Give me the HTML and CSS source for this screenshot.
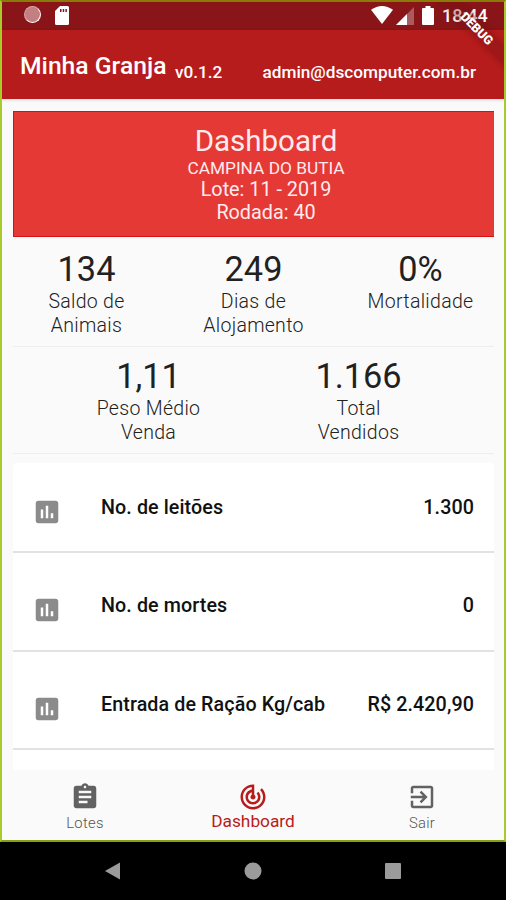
FILE: index.html
```
<!DOCTYPE html>
<html lang="pt-BR">
<head>
    <meta charset="UTF-8">
    <title>Minha Granja</title>
    <link rel="stylesheet" href="styles.css">
</head>
<body>
<div id="phone">
    <div id="app">
        <div class="status">
            <div class="status-left">
                <span class="loading"></span>
                <svg class="sd" width="14" height="19" viewBox="0 0 14 19"><path fill="#fff" fill-rule="evenodd" d="M5 0h7.500q1.500 0 1.500 1.500v16q0 1.500-1.500 1.500h-11q-1.500 0-1.500-1.500V5zM5 3v3h1.500V3zM7.700 3v3h1.500V3zM10.400 3v3h1.500V3z"/></svg>
            </div>
            <div class="status-right">
                <svg class="wifi" width="22" height="18" viewBox="0 0 22 18"><path fill="#fff" d="M0 3.800Q11-3.800 22 3.800L11 18z"/></svg>
                <svg class="signal" width="18" height="18" viewBox="0 0 18 18"><path fill="#fff" opacity=".3" d="M0 18L18 0v18z"/><path fill="#fff" d="M0 18L11 7v11z"/></svg>
                <svg class="battery" width="12" height="19" viewBox="0 0 12 19"><path fill="#fff" d="M3.500 0h5v2H11q1 0 1 1v15q0 1-1 1H1q-1 0-1-1V3q0-1 1-1h2.500z"/></svg>
                <span class="clock">18:44</span>
            </div>
        </div>
        <div class="bar">
            <h1>Minha Granja</h1>
            <span class="version">v0.1.2</span>
            <span class="user">admin@dscomputer.com.br</span>
        </div>
        <div class="content">
            <div class="card">
                <h2>Dashboard</h2>
                <p class="farm">CAMPINA DO BUTIA</p>
                <p>Lote: 11 - 2019</p>
                <p>Rodada: 40</p>
            </div>
            <div class="stats">
                <div class="stat"><b>134</b><span>Saldo de<br>Animais</span></div>
                <div class="stat"><b>249</b><span>Dias de<br>Alojamento</span></div>
                <div class="stat"><b>0%</b><span>Mortalidade</span></div>
            </div>
            <div class="stats two">
                <div class="stat"><b>1,11</b><span>Peso Médio<br>Venda</span></div>
                <div class="stat"><b>1.166</b><span>Total<br>Vendidos</span></div>
            </div>
            <ul class="list">
                <li>
                    <svg class="icon" viewBox="0 0 24 24"><path d="M19 3H5c-1.100 0-2 .9-2 2v14c0 1.100.9 2 2 2h14c1.100 0 2-.9 2-2V5c0-1.100-.9-2-2-2zM9 17H7v-7h2v7zm4 0h-2V7h2v10zm4 0h-2v-4h2v4z"/></svg>
                    <span class="name">No. de leitões</span>
                    <span class="value">1.300</span>
                </li>
                <li>
                    <svg class="icon" viewBox="0 0 24 24"><path d="M19 3H5c-1.100 0-2 .9-2 2v14c0 1.100.9 2 2 2h14c1.100 0 2-.9 2-2V5c0-1.100-.9-2-2-2zM9 17H7v-7h2v7zm4 0h-2V7h2v10zm4 0h-2v-4h2v4z"/></svg>
                    <span class="name">No. de mortes</span>
                    <span class="value">0</span>
                </li>
                <li>
                    <svg class="icon" viewBox="0 0 24 24"><path d="M19 3H5c-1.100 0-2 .9-2 2v14c0 1.100.9 2 2 2h14c1.100 0 2-.9 2-2V5c0-1.100-.9-2-2-2zM9 17H7v-7h2v7zm4 0h-2V7h2v10zm4 0h-2v-4h2v4z"/></svg>
                    <span class="name">Entrada de Ração Kg/cab</span>
                    <span class="value">R$ 2.420,90</span>
                </li>
            </ul>
        </div>
        <div class="tabs">
            <div class="tab">
                <svg class="icon" viewBox="0 0 24 24"><path d="M19 3h-4.180C14.400 1.840 13.300 1 12 1c-1.300 0-2.400.84-2.820 2H5c-1.100 0-2 .9-2 2v14c0 1.100.9 2 2 2h14c1.100 0 2-.9 2-2V5c0-1.100-.9-2-2-2zm-7 0c.55 0 1 .45 1 1s-.45 1-1 1-1-.45-1-1 .45-1 1-1zm2 14H7v-2h7v2zm3-4H7v-2h10v2zm0-4H7V7h10v2z"/></svg>
                <span>Lotes</span>
            </div>
            <div class="tab active">
                <svg class="icon" viewBox="0 0 24 24"><path d="M19.070 4.930l-1.410 1.410C19.100 7.790 20 9.790 20 12c0 4.420-3.580 8-8 8s-8-3.580-8-8c0-4.080 3.050-7.440 7-7.930v2.020C8.160 6.570 6 9.030 6 12c0 3.310 2.690 6 6 6s6-2.690 6-6c0-1.660-.67-3.160-1.760-4.240l-1.410 1.410C15.550 9.900 16 10.900 16 12c0 2.210-1.790 4-4 4s-4-1.790-4-4c0-1.860 1.280-3.410 3-3.860v2.140c-.6.35-1 .98-1 1.720 0 1.100.9 2 2 2s2-.9 2-2c0-.74-.4-1.380-1-1.720V2h-1C6.480 2 2 6.480 2 12s4.480 10 10 10 10-4.480 10-10c0-2.760-1.120-5.260-2.930-7.070z"/></svg>
                <span>Dashboard</span>
            </div>
            <div class="tab">
                <svg class="icon" viewBox="0 0 24 24"><path d="M10.090 15.590L11.500 17l5-5-5-5-1.410 1.410L12.670 11H3v2h9.670l-2.580 2.590zM19 3H5c-1.110 0-2 .9-2 2v4h2V5h14v14H5v-4H3v4c0 1.100.89 2 2 2h14c1.100 0 2-.9 2-2V5c0-1.100-.9-2-2-2z"/></svg>
                <span>Sair</span>
            </div>
        </div>
        <div class="debug"><span>DEBUG</span></div>
    </div>
    <div class="nav">
        <svg width="18" height="18" viewBox="0 0 18 18"><path d="M1 9L16 .5v17z"/></svg>
        <svg width="18" height="18" viewBox="0 0 18 18"><circle cx="9" cy="9" r="8.500"/></svg>
        <svg width="18" height="18" viewBox="0 0 18 18"><rect x="1" y="1" width="16" height="16" rx="1"/></svg>
    </div>
</div>
</body>
</html>
```
FILE: styles.css
```
* {
    margin: 0;
    padding: 0;
    list-style: none;
    box-sizing: border-box;
}

body {
    font-family: Roboto, sans-serif;
    background: #000;
}

svg {
    display: block;
}

#phone {
    width: 506px;
    height: 900px;
    overflow: hidden;
    background: #000;
}

#app {
    display: flex;
    flex-direction: column;
    position: relative;
    height: 842px;
    overflow: hidden;
    background: #fafafa;
    border: 2px solid #a9cb2a;
    border-top-color: #8a7a08;
    border-bottom-color: #85a010;
}

/* status bar */
.status {
    display: flex;
    justify-content: space-between;
    height: 28px;
    padding: 4px 17px 0 22px;
    background: #891518;
    color: #fff;
}

.status-left,
.status-right {
    display: flex;
}

.loading {
    width: 17px;
    height: 17px;
    margin-right: 14px;
    border-radius: 50%;
    background: #c48080;
    border: 1px solid #d6a5a5;
    border-right-color: #fff;
    border-bottom-color: #fff;
}

.signal {
    margin: 1px 8px 0 3px;
}

.clock {
    width: 45px;
    margin-left: 8px;
    font-size: 18px;
    line-height: 20px;
    font-weight: 500;
    white-space: nowrap;
}

/* app bar */
.bar {
    display: flex;
    align-items: baseline;
    height: 69px;
    padding: 20px 28px 0 18px;
    background: #b71c1c;
    color: #fff;
    box-shadow: 0 1px 3px rgba(0, 0, 0, 0.15);
}

.bar h1 {
    width: 155px;
    font-size: 24.700px;
    line-height: 32px;
    font-weight: 500;
    white-space: nowrap;
}

.version,
.user {
    position: relative;
    top: 4px;
    font-size: 17.200px;
    font-weight: 500;
}

.user {
    margin-left: auto;
}

.content {
    flex: 1;
    min-height: 0;
    padding: 12px 10px 0 11px;
    overflow: hidden;
}

.card {
    height: 126px;
    padding: 12px 0 0 24px;
    background: #e53935;
    border: 1px solid #da1010;
    border-width: 1px 0 1px 1px;
    color: #ffebee;
    text-align: center;
}

.card h2 {
    font-size: 29.500px;
    line-height: 34px;
    font-weight: 400;
}

.card p {
    font-size: 19.800px;
    line-height: 23px;
}

.card .farm {
    font-size: 17.300px;
    line-height: 20px;
}

/* totals */
.stats {
    display: flex;
    justify-content: center;
    height: 110px;
    padding-top: 12px;
    border-bottom: 1px solid #eee;
    text-align: center;
    color: #212121;
}

.stat {
    flex: 0 0 167px;
}

.two {
    height: 107px;
    padding-top: 9px;
}

.two .stat {
    flex-basis: 210px;
}

.stat b {
    display: block;
    font-size: 34.300px;
    line-height: 41px;
    font-weight: 400;
}

.stat span {
    display: block;
    font-size: 19.500px;
    line-height: 23.500px;
    font-weight: 300;
    letter-spacing: 0.3px;
}

.list {
    height: 330px;
    margin-top: 9px;
    background: #fff;
    border-radius: 5px;
}

.list li {
    display: flex;
    height: 98.500px;
    padding: 33px 20px 0 19px;
    border-bottom: 2px solid #e2e2e2;
    font-size: 19.700px;
    line-height: 24px;
    font-weight: 500;
    letter-spacing: 0.1px;
    color: #111;
}

.list li:first-child {
    height: 90px;
}

.list li + li {
    padding-top: 41px;
}

.icon {
    width: 30px;
    height: 30px;
    fill: #8b8b8b;
}

.list .icon {
    margin-top: 1px;
}

.name {
    margin-left: 39px;
}

.value {
    margin-left: auto;
}

/* bottom tabs */
.tabs {
    display: flex;
    height: 70px;
    background: #fafafa;
}

.tab {
    flex: 0 0 166px;
    display: flex;
    flex-direction: column;
    align-items: center;
    padding-top: 12px;
    font-size: 14.800px;
    line-height: 22px;
    font-weight: 300;
    letter-spacing: 0.3px;
    color: #555;
}

.tab .icon {
    fill: #626262;
}

.tab.active {
    flex-basis: 170px;
    font-size: 17.300px;
    line-height: 19px;
    font-weight: 400;
    letter-spacing: 0;
    color: #b71c1c;
}

.tab:last-child {
    flex-basis: 168px;
}

.active .icon {
    fill: #b71c1c;
}

/* corner ribbon */
.debug {
    position: absolute;
    top: 19px;
    right: -38px;
    width: 130px;
    height: 15px;
    transform: rotate(45deg);
    background: rgba(115, 15, 18, 0.35);
    box-shadow: 0 0 6px rgba(80, 10, 10, 0.35);
    color: #fff;
    font-size: 12.500px;
    line-height: 15px;
    font-weight: 900;
    text-align: center;
}

.nav {
    display: flex;
    justify-content: space-between;
    padding: 20px 104px 0;
}

.nav svg {
    fill: #9b9b9b;
}
```
